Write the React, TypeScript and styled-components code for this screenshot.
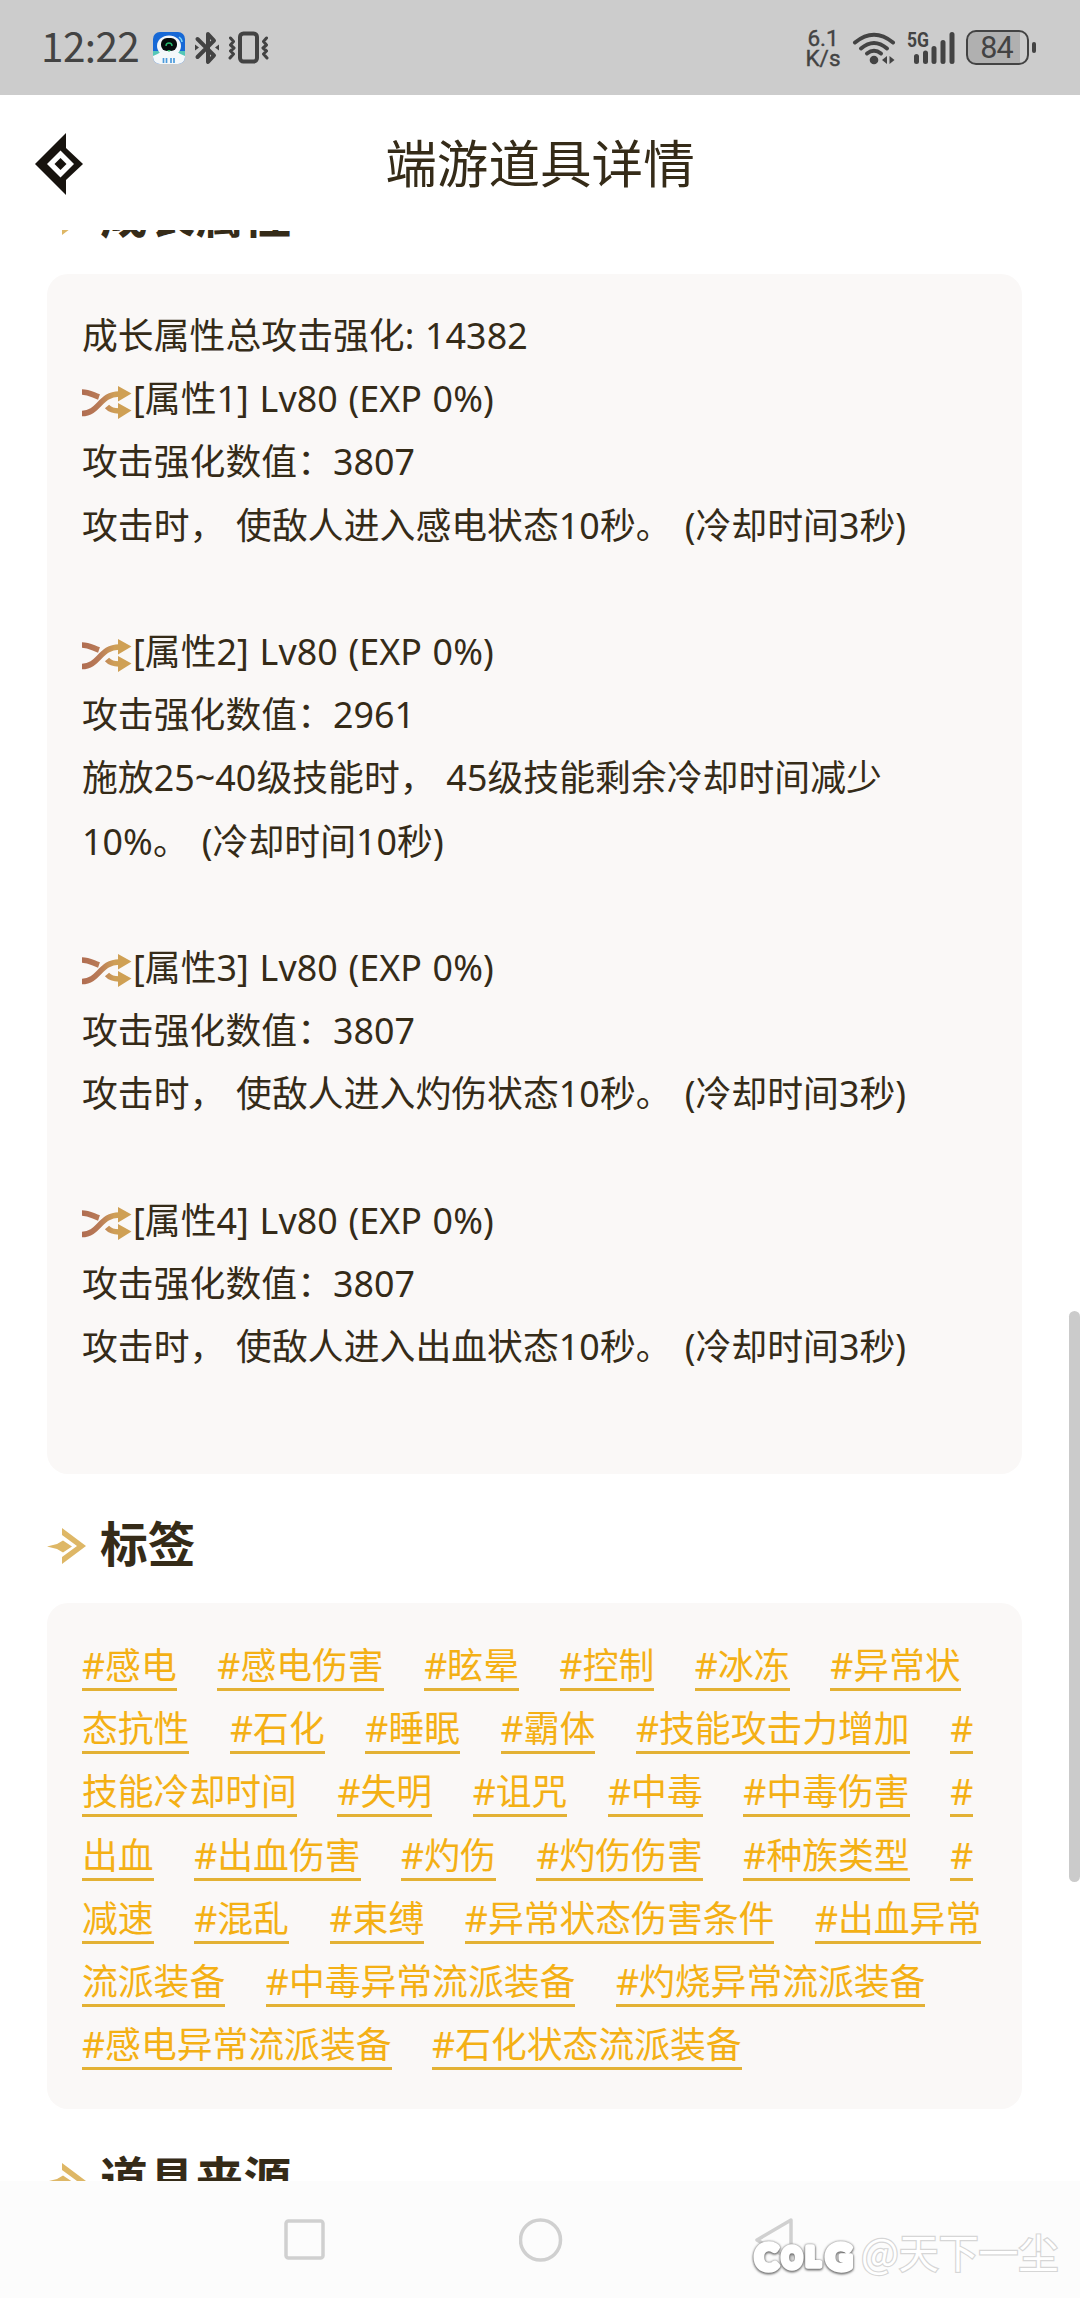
import React from "react";
import styled, { createGlobalStyle } from "styled-components";

const ink = "#352b18";
const grey = "#434343";

const GlobalStyle = createGlobalStyle`
  html, body { margin: 0; padding: 0; background: #fff; }
  body { font-family: "Noto Sans", "Noto Sans CJK SC", sans-serif; overflow: hidden; }
  * { box-sizing: border-box; }
  svg { display: block; }
`;

const Screen = styled.div`
  position: relative;
  display: flex;
  flex-direction: column;
  width: 1080px;
  height: 2298px;
  background: #fff;
  color: ${ink};
  overflow: hidden;
`;

const StatusBar = styled.header`
  display: flex;
  align-items: center;
  justify-content: space-between;
  height: 95px;
  padding: 0 44px 0 41px;
  background: #ccc;
  color: ${grey};
  flex: none;
`;

const StatusGroup = styled.div`
  display: flex;
  align-items: center;
`;

const Clock = styled.span`
  width: 112px;
  margin-bottom: 6px;
  font: 400 40.5px/60px "Noto Sans CJK SC", sans-serif;
  letter-spacing: -0.6px;
`;

const Speed = styled.div`
  display: flex;
  flex-direction: column;
  width: 46px;
  text-align: center;
  font: 400 22.5px/20px Roboto, sans-serif;
  -webkit-text-stroke: 0.4px ${grey};
`;

const Battery = styled.div`
  display: flex;
  align-items: center;
  gap: 3px;
  margin-left: 11px;
`;

const BatteryShell = styled.div`
  display: flex;
  align-items: center;
  justify-content: center;
  width: 63px;
  height: 35px;
  padding-right: 2px;
  border: 2.5px solid ${grey};
  border-radius: 10px;
  background: linear-gradient(90deg, #b0b0b0 0 52px, #ccc 52px);
  font: 400 30.5px/30px Roboto, sans-serif;
  letter-spacing: -1px;
`;

const BatteryTip = styled.div`
  width: 4px;
  height: 11px;
  border-radius: 2px;
  background: ${grey};
`;

const TitleBar = styled.div`
  display: grid;
  grid-template-columns: 120px 1fr 120px;
  align-items: center;
  height: 135px;
  flex: none;
  background: #fff;
`;

const BackButton = styled.button`
  border: 0;
  background: none;
  padding: 2px 0 0 34px;
`;

const Title = styled.h1`
  margin: 0 0 3px;
  text-align: center;
  font: 400 51.6px/70px "Noto Sans CJK SC", sans-serif;
`;

const Content = styled.main`
  height: 1951px;
  flex: none;
  overflow: hidden;
  padding: 0 58px 0 47px;
`;

const Stack = styled.div`
  display: flex;
  flex-direction: column;
  margin-top: -85px;
`;

const SectionHead = styled.div`
  display: flex;
  align-items: center;
  gap: 14px;
  height: 129px;
  padding-top: 14px;
  flex: none;
`;

const SectionTitle = styled.h2`
  margin: 0 0 7px -1px;
  font: 700 47.8px/64px "Noto Sans CJK SC", sans-serif;
`;

const Card = styled.section<{ $height: number }>`
  height: ${(p) => p.$height}px;
  flex: none;
  padding: 32px 35px;
  border-radius: 21px;
  background: #faf8f7;
`;

const Row = styled.div`
  display: flex;
  align-items: center;
  height: 63.2px;
  font-size: 35.8px;
  line-height: 58px;
  white-space: pre;
`;

const Line = styled(Row)`
  padding-bottom: 5px;
  letter-spacing: 0.06px;
  word-spacing: 1.3px;
`;

const Cooldown = styled.span`
  margin-left: 2.4px;
`;

const TagRow = styled(Row)`
  gap: 40.6px;
`;

const Tag = styled.a`
  height: 49px;
  line-height: 46px;
  border-bottom: 3px solid #e3b134;
  color: #f4b015;
`;

const ShuffleWrap = styled.span`
  width: 51px;
  padding-top: 9px;
`;

const ScrollThumb = styled.div`
  position: absolute;
  right: 0;
  top: 1311px;
  width: 11px;
  height: 571px;
  border-radius: 6px;
  background: #cbcbcb;
`;

const NavBar = styled.nav`
  display: flex;
  align-items: center;
  height: 117px;
  padding-left: 284px;
  background: #fcfcfc;
  flex: none;
`;

const NavItem = styled.div`
  width: 235px;
`;

const Watermark = styled.div`
  position: absolute;
  left: 748px;
  top: 2223px;
  display: flex;
  align-items: center;
  height: 56px;
`;

const UserName = styled.span`
  margin-left: 2px;
  color: #fff;
  font: 400 39.9px/56px "Noto Sans CJK SC", sans-serif;
  -webkit-text-stroke: 2.4px #d6d6d6;
  paint-order: stroke fill;
`;

const BrandSvg = styled.svg`
  filter: drop-shadow(0 1px 1.2px #666) drop-shadow(0 0 1px #999);
  overflow: visible;
`;

const Brand = () => (
  <BrandSvg width="111" height="56" viewBox="0 0 111 56">
    <g fill="#fff" stroke="#fff" strokeWidth="5.500" strokeLinejoin="round" fontFamily="Lato, sans-serif" fontWeight="900" lengthAdjust="spacingAndGlyphs">
      <text x="7" y="47" fontSize="36" textLength="23" lengthAdjust="spacingAndGlyphs">C</text>
      <text x="34" y="45" fontSize="28" textLength="20" lengthAdjust="spacingAndGlyphs">O</text>
      <text x="58" y="43" fontSize="26" textLength="14" lengthAdjust="spacingAndGlyphs">L</text>
      <text x="78" y="47" fontSize="36" textLength="26" lengthAdjust="spacingAndGlyphs">G</text>
    </g>
  </BrandSvg>
);

const AssistantIcon = () => (
  <svg width="32" height="32" viewBox="0 0 32 32">
    <defs>
      <clipPath id="app"><rect width="32" height="32" rx="7" /></clipPath>
    </defs>
    <g clipPath="url(#app)">
      <rect width="32" height="32" fill="#1668d6" />
      <path d="M0 19h32v6H0z" fill="#55c7b8" />
      <ellipse cx="16" cy="14" rx="12" ry="10.5" fill="#f2f6fa" />
      <path d="M0 24q5-2 8-4h16q3 2 8 4v8H0z" fill="#f4f8fa" />
      <rect x="8" y="6" width="16" height="13" rx="6" fill="#050b0c" />
      <path d="M13 14q0-3 3-3t3 3" fill="none" stroke="#25b96e" strokeWidth="1.4" />
      <path d="M14 18h4l-2 2z" fill="#32b86d" />
      <path d="M26 5q3 2 3 5" fill="none" stroke="#7fd6f7" strokeWidth="1.5" />
      <path d="M10.500 26v5M13.500 26v5M18 26v5M21 26v5" stroke="#4a9bdc" strokeWidth="1.7" />
    </g>
  </svg>
);

const IconGap = styled.span<{ $left: number }>`
  margin-left: ${(p) => p.$left}px;
`;

const BluetoothIcon = () => (
  <svg width="26" height="34" viewBox="0 0 26 34">
    <path d="M3.500 8 20 24.500 14 31V3l6 6.500L3.500 26" fill="none" stroke={grey} strokeWidth="4" strokeLinejoin="round" strokeLinecap="round" />
    <path d="M1 13.500v6l4-3zM25 13.500v6l-4-3z" fill={grey} />
  </svg>
);

const VibrateIcon = () => (
  <svg width="41" height="34" viewBox="0 0 41 34">
    <rect x="12" y="2.500" width="17" height="28" rx="3.500" fill="none" stroke={grey} strokeWidth="4" />
    <path d="M2.500 7l3 3.500-3 3.500 3.500 3-3.500 3 3 3-3.500 4M38.500 7l-3 3.500 3 3.500-3.500 3 3.500 3-3 3 3.500 4" fill="none" stroke={grey} strokeWidth="3" strokeLinejoin="round" strokeLinecap="round" />
  </svg>
);

const WifiIcon = () => (
  <svg width="44" height="34" viewBox="0 0 44 34">
    <g fill="none" stroke={grey} strokeWidth="4" strokeLinecap="round">
      <path d="M3 11.500Q22-4 41 11.500" />
      <path d="M9 17.500Q22 6.500 35 17.500" />
      <path d="M15 22.500Q22 17 29 22.500" />
    </g>
    <circle cx="22" cy="29" r="4.300" fill={grey} />
    <path d="M35 25v8l-5-4zM37.500 25v8l5-4z" fill={grey} />
  </svg>
);

const CellIcon = () => (
  <svg width="48" height="34" viewBox="0 0 48 34">
    <path d="M9.500 25.500v5M18.500 22v8.500M27 17.500v13M36 11.500v19M45 3.500v27" fill="none" stroke={grey} strokeWidth="5" strokeLinecap="round" />
    <text x="0" y="16" fill={grey} fontFamily="Roboto, sans-serif" fontWeight="700" fontSize="20.500" textLength="22" lengthAdjust="spacingAndGlyphs">5G</text>
  </svg>
);

const BackIcon = () => (
  <svg width="50" height="64" viewBox="0 0 50 64">
    <path d="M32 1v15l17 16-17 16v15L1 32z" fill="#17130e" />
    <path d="M26.500 18.500 40 32 26.500 45.500 13 32z" fill="#fff" />
    <path d="M26.500 26 32.500 32 26.500 38 20.500 32z" fill="#17130e" />
  </svg>
);

const HeadIcon = () => (
  <svg width="40" height="38" viewBox="0 0 40 38">
    <path d="M0 19.500 10 17l6-3.500 9 6-9 6L10 22z" fill="#deb766" />
    <path d="M15 1 39 19 15 37v-7l15-11L15 8z" fill="#deb766" />
  </svg>
);

const ShuffleIcon = () => (
  <svg width="50" height="34" viewBox="0 0 50 34">
    <defs>
      <linearGradient id="warm" gradientUnits="userSpaceOnUse" x1="0" y1="0" x2="50" y2="0">
        <stop offset="0" stopColor="#b06d51" />
        <stop offset="0.350" stopColor="#b97b57" />
        <stop offset="0.650" stopColor="#cf9f57" />
        <stop offset="1" stopColor="#c9a04e" />
      </linearGradient>
    </defs>
    <g fill="none" stroke="url(#warm)" strokeWidth="5.600">
      <path d="M0 6C7 6 10 8.500 17 11" />
      <path d="M0 27.500C17 27.500 18 8 37 8" />
      <path d="M25 20.500Q29 25 37 25" />
    </g>
    <path d="M36 0 49.500 7.500 36 15.500zM36 17 49.500 24.500 36 33z" fill="#cfa054" />
  </svg>
);

const attributes = [
  { id: 1, value: "3807", effect: ["攻击时， 使敌人进入感电状态10秒。 |(冷却时间3秒)"] },
  { id: 2, value: "2961", effect: ["施放25~40级技能时， 45级技能剩余冷却时间减少", "10%。 |(冷却时间10秒)"] },
  { id: 3, value: "3807", effect: ["攻击时， 使敌人进入灼伤状态10秒。 |(冷却时间3秒)"] },
  { id: 4, value: "3807", effect: ["攻击时， 使敌人进入出血状态10秒。 |(冷却时间3秒)"] },
];

const tagRows = [
  ["#感电", "#感电伤害", "#眩晕", "#控制", "#冰冻", "#异常状"],
  ["态抗性", "#石化", "#睡眠", "#霸体", "#技能攻击力增加", "#"],
  ["技能冷却时间", "#失明", "#诅咒", "#中毒", "#中毒伤害", "#"],
  ["出血", "#出血伤害", "#灼伤", "#灼伤伤害", "#种族类型", "#"],
  ["减速", "#混乱", "#束缚", "#异常状态伤害条件", "#出血异常"],
  ["流派装备", "#中毒异常流派装备", "#灼烧异常流派装备"],
  ["#感电异常流派装备", "#石化状态流派装备"],
];

const Effect = ({ text }: { text: string }) => {
  const [body, cooldown] = text.split("|");
  return (
    <Line>
      {body}
      {cooldown && <Cooldown>{cooldown}</Cooldown>}
    </Line>
  );
};

const Heading = ({ children }: { children: React.ReactNode }) => (
  <SectionHead>
    <HeadIcon />
    <SectionTitle>{children}</SectionTitle>
  </SectionHead>
);

export default function App() {
  return (
    <Screen>
      <GlobalStyle />
      <StatusBar>
        <StatusGroup>
          <Clock>12:22</Clock>
          <AssistantIcon />
          <IconGap $left={9}><BluetoothIcon /></IconGap>
          <IconGap $left={8}><VibrateIcon /></IconGap>
        </StatusGroup>
        <StatusGroup>
          <Speed><span>6.1</span><span>K/s</span></Speed>
          <IconGap $left={6}><WifiIcon /></IconGap>
          <IconGap $left={11}><CellIcon /></IconGap>
          <Battery>
            <BatteryShell>84</BatteryShell>
            <BatteryTip />
          </Battery>
        </StatusGroup>
      </StatusBar>
      <TitleBar>
        <BackButton><BackIcon /></BackButton>
        <Title>端游道具详情</Title>
      </TitleBar>
      <Content>
        <Stack>
          <Heading>成长属性</Heading>
          <Card $height={1200}>
            <Line>成长属性总攻击强化: 14382</Line>
            {attributes.map((a) => (
              <React.Fragment key={a.id}>
                <Line>
                  <ShuffleWrap><ShuffleIcon /></ShuffleWrap>
                  <span>[属性{a.id}] Lv80 (EXP 0%)</span>
                </Line>
                <Line>攻击强化数值：{a.value}</Line>
                {a.effect.map((e) => <Effect key={e} text={e} />)}
                <Line />
              </React.Fragment>
            ))}
          </Card>
          <Heading>标签</Heading>
          <Card $height={506}>
            {tagRows.map((row, i) => (
              <TagRow key={i}>
                {row.map((t, j) => <Tag key={j}>{t}</Tag>)}
              </TagRow>
            ))}
          </Card>
          <Heading>道具来源</Heading>
        </Stack>
      </Content>
      <NavBar>
        <NavItem>
          <svg width="41" height="41"><rect x="2" y="2" width="37" height="37" rx="2.500" fill="none" stroke="#d0d0d0" strokeWidth="3.500" /></svg>
        </NavItem>
        <NavItem>
          <svg width="44" height="44"><circle cx="21.500" cy="22" r="20" fill="none" stroke="#d0d0d0" strokeWidth="3.500" /></svg>
        </NavItem>
        <NavItem>
          <svg width="44" height="48"><path d="M37 4 3 24 37 44z" fill="none" stroke="#d0d0d0" strokeWidth="3.500" strokeLinejoin="round" /></svg>
        </NavItem>
      </NavBar>
      <ScrollThumb />
      <Watermark>
        <Brand />
        <UserName>@天下一尘</UserName>
      </Watermark>
    </Screen>
  );
}
